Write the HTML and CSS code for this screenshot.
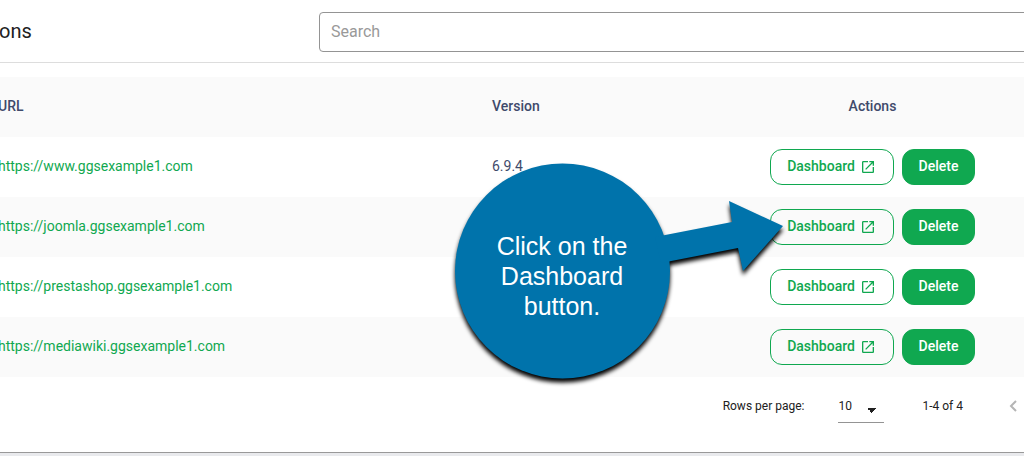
FILE: index.html
```html
<!DOCTYPE html>
<html lang="en">
<head>
    <meta charset="UTF-8">
    <meta name="viewport" content="width=device-width, initial-scale=1.0">
    <title>Applications</title>
    <link rel="stylesheet" href="styles.css">
</head>
<body>
    <svg class="sprite" width="0" height="0">
        <symbol id="open-icon" viewBox="0 0 24 24">
            <path fill="currentColor" d="M19 19H5V5h7V3H5a2 2 0 0 0-2 2v14a2 2 0 0 0 2 2h14c1.100 0 2-.9 2-2v-7h-2v7zM14 3v2h3.590l-9.830 9.830 1.410 1.410L19 6.410V10h2V3h-7z"/>
        </symbol>
    </svg>

    <main class="panel">
        <header class="toolbar">
            <h1>ons</h1>
            <input class="search" type="text" placeholder="Search" aria-label="Search">
        </header>

        <table class="apps">
            <thead>
                <tr>
                    <th class="col-url">URL</th>
                    <th class="col-version">Version</th>
                    <th class="col-actions">Actions</th>
                </tr>
            </thead>
            <tbody>
                <tr>
                    <td><a href="#">https://www.ggsexample1.com</a></td>
                    <td>6.9.4</td>
                    <td>
                        <div class="actions">
                            <button class="btn btn-outline" type="button">Dashboard <svg class="icon"><use href="#open-icon"/></svg></button>
                            <button class="btn btn-fill" type="button">Delete</button>
                        </div>
                    </td>
                </tr>
                <tr>
                    <td><a href="#">https://joomla.ggsexample1.com</a></td>
                    <td></td>
                    <td>
                        <div class="actions">
                            <button class="btn btn-outline" type="button">Dashboard <svg class="icon"><use href="#open-icon"/></svg></button>
                            <button class="btn btn-fill" type="button">Delete</button>
                        </div>
                    </td>
                </tr>
                <tr>
                    <td><a href="#">https://prestashop.ggsexample1.com</a></td>
                    <td></td>
                    <td>
                        <div class="actions">
                            <button class="btn btn-outline" type="button">Dashboard <svg class="icon"><use href="#open-icon"/></svg></button>
                            <button class="btn btn-fill" type="button">Delete</button>
                        </div>
                    </td>
                </tr>
                <tr>
                    <td><a href="#">https://mediawiki.ggsexample1.com</a></td>
                    <td></td>
                    <td>
                        <div class="actions">
                            <button class="btn btn-outline" type="button">Dashboard <svg class="icon"><use href="#open-icon"/></svg></button>
                            <button class="btn btn-fill" type="button">Delete</button>
                        </div>
                    </td>
                </tr>
            </tbody>
        </table>

        <footer class="paginator">
            <label for="page-size">Rows per page:</label>
            <select id="page-size">
                <option>10</option>
                <option>25</option>
                <option>50</option>
            </select>
            <span class="range">1-4 of 4</span>
            <button class="prev" type="button" aria-label="Previous page" disabled>
                <svg viewBox="0 0 8 12" width="8" height="12"><path d="M7 1L2 6l5 5" fill="none" stroke="currentColor" stroke-width="2"/></svg>
            </button>
        </footer>
    </main>

    <div class="callout">
        <svg class="callout-shape" viewBox="0 0 330 216" width="330" height="216">
            <circle cx="107.5" cy="108" r="107.500"/>
            <path d="M200 74L277 59l-3-21 54 25-40 45-5-23-77 15z"/>
        </svg>
        <p>Click on the Dashboard button.</p>
    </div>
</body>
</html>
```
FILE: styles.css
```css
* {
    box-sizing: border-box;
}
body {
    margin: 0;
    font-family: Roboto, sans-serif;
    font-size: 14px;
    color: #3f4a6b;
    background-color: #e9eaed;
    overflow: hidden;
}
.sprite {
    position: absolute;
}
.panel {
    margin-left: -2px;
    background-color: #fff;
    border-bottom: 1px solid #999;
    box-shadow: 0 1px 3px rgba(0, 0, 0, 0.3);
}

/* toolbar */
.toolbar {
    display: flex;
    align-items: center;
    padding: 12px 0 10px 1px;
    margin-bottom: 14px;
    border-bottom: 1px solid #ddd;
}
.toolbar h1 {
    flex: 0 0 320px;
    margin: 0;
    padding-bottom: 2px;
    font-size: 20px;
    font-weight: 400;
    color: #212121;
}
.search {
    flex: 1;
    height: 40px;
    margin-right: -8px;
    padding: 0 11px 2px;
    border: 1px solid #949494;
    border-radius: 4px;
    font-family: inherit;
    font-size: 16px;
    background-color: #fff;
}
.search::placeholder {
    color: #999;
}

/* table */
.apps {
    width: 100%;
    table-layout: fixed;
    border-collapse: collapse;
}
.apps tr {
    height: 60px;
}
.apps th,
.apps td {
    padding: 0 0 2px;
    text-align: left;
    font-weight: 400;
}
.apps th {
    font-weight: 500;
}
.apps thead tr,
.apps tbody tr:nth-child(even) {
    background-color: #fafafa;
}
.apps a {
    color: #10a850;
    text-decoration: none;
}
.col-version {
    width: 229px;
}
.apps .col-actions {
    width: 303px;
    text-align: center;
}
.actions {
    display: flex;
    justify-content: center;
    gap: 8px;
    padding-top: 2px;
}
.btn {
    display: flex;
    align-items: center;
    justify-content: center;
    gap: 5px;
    height: 36px;
    border: 1px solid #10a850;
    border-radius: 12px;
    font-family: inherit;
    font-size: 14px;
    font-weight: 500;
    cursor: pointer;
}
.btn-outline {
    width: 124px;
    padding: 0 0 2px;
    color: #10a850;
    background-color: transparent;
}
.btn-fill {
    padding: 0 16px 2px;
    color: #fff;
    background-color: #10a850;
}
.icon {
    width: 16px;
    height: 16px;
    margin-top: 2px;
}

/* paginator */
.paginator {
    display: flex;
    align-items: center;
    justify-content: flex-end;
    height: 75px;
    padding: 0 7px 17px 0;
    font-size: 12px;
    color: #212121;
}
.paginator select {
    width: 46px;
    height: 34px;
    margin: 0 38px 0 34px;
    padding: 0;
    border: none;
    border-bottom: 1px solid #949494;
    border-radius: 0;
    appearance: none;
    font-family: inherit;
    font-size: 12px;
    color: inherit;
    background: linear-gradient(to bottom left, #212121 50%, transparent 50%) 29px 19px / 5px 5px no-repeat,
        linear-gradient(to bottom right, #212121 50%, transparent 50%) 34px 19px / 5px 5px no-repeat;
}
.prev {
    display: flex;
    margin-left: 46px;
    padding: 0;
    border: none;
    color: #b5b5b5;
    background: none;
}

/* callout drawn over the table */
.callout {
    position: absolute;
    top: 163px;
    left: 455px;
    display: flex;
    align-items: center;
    width: 216px;
    height: 216px;
}
.callout-shape {
    position: absolute;
    top: 0;
    left: 0;
    overflow: visible;
    fill: #0073ab;
    filter: drop-shadow(0 4px 2px rgba(0, 0, 0, 1));
}
.callout p {
    position: relative;
    width: 100%;
    margin: 0;
    padding: 10px 36px 0 34px;
    font-family: "Liberation Sans", Arial, sans-serif;
    font-size: 25px;
    line-height: 30px;
    text-align: center;
    color: #fff;
}
```
